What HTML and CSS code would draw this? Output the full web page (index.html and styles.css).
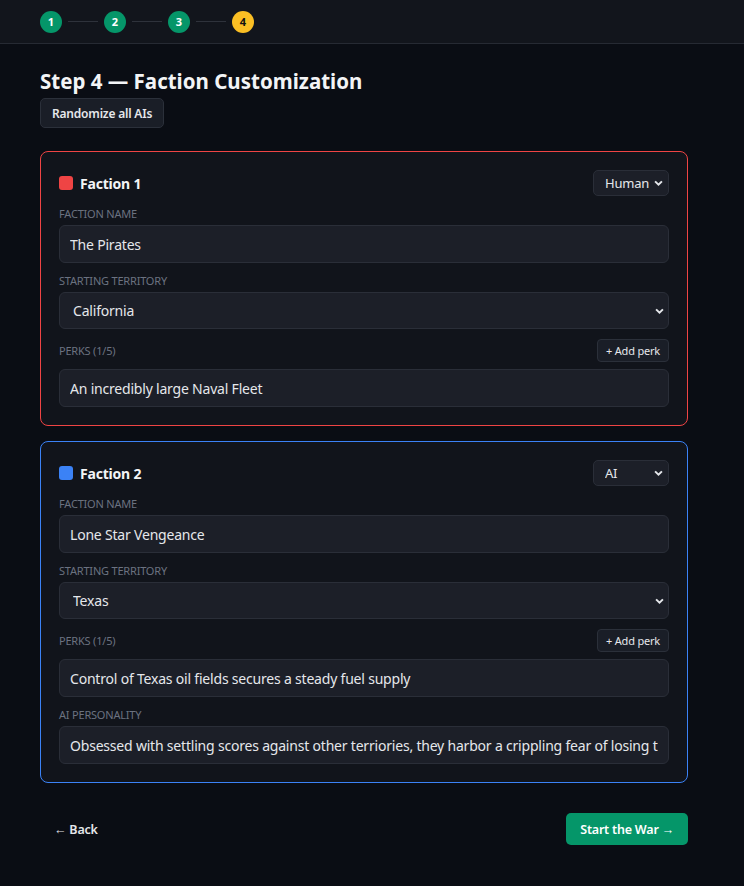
FILE: index.html
```html
<!DOCTYPE html>
<html lang="en">
<head>
  <meta charset="UTF-8" />
  <title>Faction Customization</title>
  <meta name="viewport" content="width=device-width, initial-scale=1.0" />
  <link rel="stylesheet" href="styles.css">
</head>
<body>

  <header class="stepper-bar">
    <div class="stepper">
      <span class="step done">1</span>
      <span class="step-line"></span>
      <span class="step done">2</span>
      <span class="step-line"></span>
      <span class="step done">3</span>
      <span class="step-line"></span>
      <span class="step current">4</span>
    </div>
  </header>

  <main class="page">
    <h1>Step 4 — Faction Customization</h1>
    <button class="btn">Randomize all AIs</button>

    <!-- faction 1 -->
    <section class="card card-red">
      <div class="card-head">
        <div class="faction-title"><span class="swatch swatch-red"></span>Faction 1</div>
        <div class="select-wrap select-small">
          <select class="select"><option>Human</option><option>AI</option></select>
          <svg class="chev" viewBox="0 0 10 6" width="9" height="6"><path d="M1.2 1.2l3.8 3.6 3.8-3.6" fill="none" stroke="#e5e7eb" stroke-width="2.2"/></svg>
        </div>
      </div>

      <div class="field">
        <label class="label">Faction name</label>
        <input class="input" type="text" value="The Pirates">
      </div>

      <div class="field">
        <label class="label">Starting territory</label>
        <div class="select-wrap">
          <select class="select select-big"><option>California</option></select>
          <svg class="chev" viewBox="0 0 10 6" width="9" height="6"><path d="M1.2 1.2l3.8 3.6 3.8-3.6" fill="none" stroke="#e5e7eb" stroke-width="2.2"/></svg>
        </div>
      </div>

      <div class="field">
        <div class="perks-row">
          <label class="label">Perks (1/5)</label>
          <button class="btn btn-small">+ Add perk</button>
        </div>
        <input class="input" type="text" value="An incredibly large Naval Fleet">
      </div>
    </section>

    <!-- faction 2 -->
    <section class="card card-blue">
      <div class="card-head">
        <div class="faction-title"><span class="swatch swatch-blue"></span>Faction 2</div>
        <div class="select-wrap select-small">
          <select class="select"><option>AI</option><option>Human</option></select>
          <svg class="chev" viewBox="0 0 10 6" width="9" height="6"><path d="M1.2 1.2l3.8 3.6 3.8-3.6" fill="none" stroke="#e5e7eb" stroke-width="2.2"/></svg>
        </div>
      </div>

      <div class="field">
        <label class="label">Faction name</label>
        <input class="input" type="text" value="Lone Star Vengeance">
      </div>

      <div class="field">
        <label class="label">Starting territory</label>
        <div class="select-wrap">
          <select class="select select-big"><option>Texas</option></select>
          <svg class="chev" viewBox="0 0 10 6" width="9" height="6"><path d="M1.2 1.2l3.8 3.6 3.8-3.6" fill="none" stroke="#e5e7eb" stroke-width="2.2"/></svg>
        </div>
      </div>

      <div class="field">
        <div class="perks-row">
          <label class="label">Perks (1/5)</label>
          <button class="btn btn-small">+ Add perk</button>
        </div>
        <input class="input" type="text" value="Control of Texas oil fields secures a steady fuel supply">
      </div>

      <div class="field">
        <label class="label">AI personality</label>
        <input class="input" type="text" value="Obsessed with settling scores against other terriories, they harbor a crippling fear of losing their homeland">
      </div>
    </section>

    <div class="footer-nav">
      <button class="btn-link">← Back</button>
      <button class="btn-go">Start the War →</button>
    </div>
  </main>

</body>
</html>
```

FILE: styles.css
```css
body {
  margin: 0;
  background: #0a0d14;
  color: #e5e7eb;
  font-family: "Noto Sans", "Open Sans", sans-serif;
  letter-spacing: -0.2px;
}

/* top stepper */
.stepper-bar {
  height: 43px;
  background: #12151c;
  border-bottom: 1px solid #262a33;
  display: flex;
  align-items: center;
  padding: 0 40px;
}

.stepper {
  display: flex;
  align-items: center;
  gap: 6px;
}

.step {
  width: 22px;
  height: 22px;
  border-radius: 50%;
  display: flex;
  align-items: center;
  justify-content: center;
  font-size: 11px;
  font-weight: 700;
  letter-spacing: 0;
}

.step.done {
  background: #059669;
  color: #fff;
}

.step.current {
  background: #fbbf24;
  color: #111;
}

.step-line {
  width: 30px;
  height: 1px;
  background: #2e323b;
}

/* page */
.page {
  width: 648px;
  padding: 24px 40px 40px;
}

h1 {
  font-size: 20.5px;
  font-weight: 700;
  margin: 0 0 4px;
  line-height: 26px;
  letter-spacing: 0;
  color: #f3f4f6;
}

.btn {
  background: #1a1e27;
  border: 1px solid #2b303a;
  border-radius: 5px;
  color: #e5e7eb;
  font-family: inherit;
  letter-spacing: inherit;
  font-size: 12px;
  font-weight: 600;
  height: 30px;
  padding: 0 11px;
  cursor: pointer;
}

.btn-small {
  height: 23px;
  font-size: 11px;
  font-weight: 400;
  padding: 0 8px;
  border-radius: 4px;
}

/* cards */
.card {
  margin-top: 23px;
  background: #11141b;
  border: 1px solid #2b303a;
  border-radius: 8px;
  padding: 18px;
  display: flex;
  flex-direction: column;
  gap: 10px;
}

.card + .card {
  margin-top: 15px;
}

.card-red { border-color: #ef4444; }
.card-blue { border-color: #3b82f6; }

.card-head {
  display: flex;
  justify-content: space-between;
  align-items: center;
}

.faction-title {
  display: flex;
  align-items: center;
  gap: 7px;
  font-size: 14px;
  font-weight: 700;
  color: #f3f4f6;
}

.swatch {
  width: 14px;
  height: 14px;
  border-radius: 3px;
}

.swatch-red { background: #ef4444; }
.swatch-blue { background: #3b82f6; }

.field {
  display: flex;
  flex-direction: column;
}

.label {
  font-size: 11px;
  line-height: 15px;
  text-transform: uppercase;
  color: #6b7280;
  margin-bottom: 4px;
}

.input {
  height: 38px;
  box-sizing: border-box;
  background: #1c1f28;
  border: 1px solid #2a2e38;
  border-radius: 6px;
  color: #e5e7eb;
  font-family: inherit;
  letter-spacing: inherit;
  font-size: 14px;
  padding: 0 10px;
  outline: none;
}

.select-wrap {
  position: relative;
}

.select {
  appearance: none;
  width: 100%;
  height: 26px;
  box-sizing: border-box;
  background: #1c1f28;
  border: 1px solid #2a2e38;
  border-radius: 5px;
  color: #e5e7eb;
  font-family: inherit;
  letter-spacing: inherit;
  font-size: 13px;
  padding: 0 11px;
  outline: none;
}

.select-small {
  width: 76px;
}

.select-big {
  height: 37px;
  font-size: 14px;
  padding: 0 13px;
  border-radius: 6px;
}

.chev {
  position: absolute;
  right: 5px;
  top: 50%;
  margin-top: -3px;
  pointer-events: none;
}

.select-small .chev {
  right: 6px;
}

.perks-row {
  display: flex;
  justify-content: space-between;
  align-items: center;
  margin-bottom: 7px;
}

.perks-row .label {
  margin-bottom: 0;
}

/* footer */
.footer-nav {
  display: flex;
  justify-content: space-between;
  align-items: center;
  margin-top: 30px;
}

.btn-link {
  background: none;
  border: none;
  color: #e5e7eb;
  font-family: inherit;
  letter-spacing: inherit;
  font-size: 12.5px;
  font-weight: 600;
  padding: 0 14px;
  height: 32px;
  cursor: pointer;
}

.btn-go {
  background: #059669;
  border: none;
  border-radius: 5px;
  color: #fff;
  font-family: inherit;
  letter-spacing: inherit;
  font-size: 12.5px;
  font-weight: 600;
  height: 32px;
  padding: 0 14px;
  cursor: pointer;
}
```
